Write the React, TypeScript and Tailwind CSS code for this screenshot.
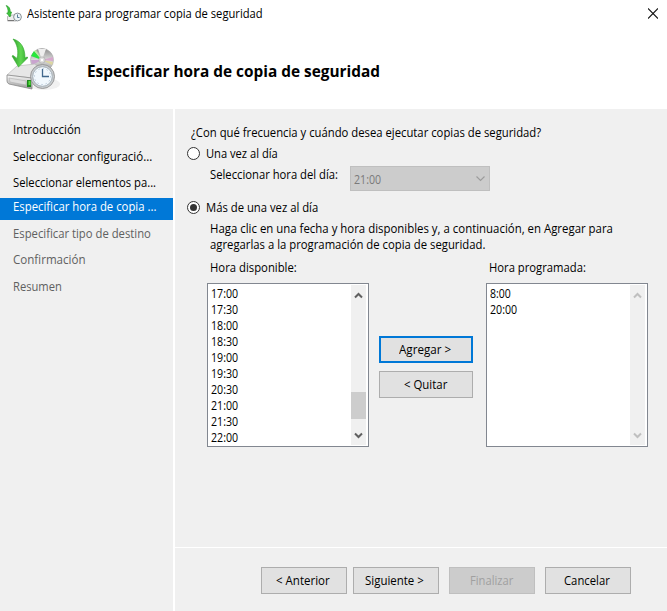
import { useLayoutEffect, useRef, useState } from "react";

/* One line of text condensed or widened to a given width. */
function Line({ w, children, className = "" }: { w: number; children: string; className?: string }) {
  const ref = useRef<HTMLSpanElement>(null);
  const [scale, setScale] = useState(1);
  useLayoutEffect(() => {
    if (ref.current) setScale(w / ref.current.offsetWidth);
  }, [w, children]);
  return (
    <span className={`block h-4 leading-4 ${className}`} style={{ width: w }}>
      <span ref={ref} className="inline-block origin-left whitespace-pre" style={{ transform: `scaleX(${scale})` }}>
        {children}
      </span>
    </span>
  );
}

function BackupIcon({ className }: { className: string }) {
  return (
    <svg className={className} viewBox="0 0 54 54">
      <defs>
        <linearGradient id="arrow" x1="0" y1="0" x2="1" y2="0">
          <stop offset="0" stopColor="#2f9a2c" />
          <stop offset=".55" stopColor="#5fd850" />
          <stop offset="1" stopColor="#2fa32b" />
        </linearGradient>
        <linearGradient id="disc" x1="0" y1="0" x2="0" y2="1">
          <stop offset="0" stopColor="#8c8c8c" />
          <stop offset=".5" stopColor="#dcdcdc" />
          <stop offset="1" stopColor="#999" />
        </linearGradient>
        <linearGradient id="drive" x1="0" y1="0" x2="0" y2="1">
          <stop offset="0" stopColor="#fafafa" />
          <stop offset="1" stopColor="#999" />
        </linearGradient>
      </defs>
      <ellipse cx="38" cy="46" rx="16" ry="6" fill="#f1f1f1" />
      <circle cx="36" cy="22" r="11.5" fill="url(#disc)" stroke="#aaa" strokeWidth=".6" />
      <path d="m36 22-11-4 3-5z" fill="#27e83b" />
      <path d="m36 22-8-9 2-1z" fill="#b9eda0" />
      <path d="m36 22-4-11h8z" fill="#eee" />
      <path d="m36 22 11-3v4z" fill="#d6a8cd" />
      <path d="m36 22 11 2-1 3z" fill="#ddd6a0" />
      <path d="m36 22-11 0 1 5z" fill="#c9a4cf" />
      <circle cx="36" cy="22" r="3.2" fill="#ddd" stroke="#999" strokeWidth=".5" />
      <circle cx="36" cy="22" r="1.2" fill="#fff" />
      <path d="m1 37 10-9 18-2 5 6-8 8z" fill="#e6e6e6" stroke="#bbb" strokeWidth=".7" />
      <path d="m1 37 25 3v11L3 46q-2-1-2-3z" fill="url(#drive)" stroke="#888" strokeWidth=".8" />
      <path d="m3 40 17 3v4L4 44z" fill="#ddd" stroke="#aaa" strokeWidth=".5" />
      <path d="M21 42h4v7h-4z" fill="#1d861d" />
      <path d="M22.500 43h2v4h-2z" fill="#56e03b" />
      <path d="M7 1c8 2 12 9 12 19l2-1 1 .6-9.500 9.400L6 18l1-.6 4 3C13 13 11 6 7 1z" fill="url(#arrow)" stroke="#31a82e" strokeWidth=".6" />
      <circle cx="36.500" cy="38.500" r="12" fill="#c8cccf" stroke="#8a8a8a" strokeWidth=".8" />
      <circle cx="36.500" cy="38.500" r="9.800" fill="#f1f8fd" stroke="#98a3ac" strokeWidth=".8" />
      <circle cx="36.500" cy="38.500" r="8" fill="none" stroke="#8ca5bd" strokeWidth="1" strokeDasharray=".8 3.389" />
      <path d="M36.500 31v7.500H43" fill="none" stroke="#41688d" strokeWidth="1.300" />
    </svg>
  );
}

function SmallBackupIcon() {
  return (
    <svg className="h-[17px] w-[17px]" viewBox="0 0 17 17">
      <path d="m2.500 11.500 5-1.500h4v6h-9z" fill="#eee" stroke="#aaa" strokeWidth=".8" />
      <path d="M3 15.500h6" stroke="#777" />
      <path d="M1.200.5c3 1 4 3 4 6.500L6.500 7 5 12 1.700 8l1.300-.1C3.500 5 2.500 2.500 1.200.5z" fill="#40c73c" stroke="#229a27" strokeWidth=".7" />
      <circle cx="12.500" cy="12" r="3.900" fill="#eef5f8" stroke="#8b9296" strokeWidth="1" />
      <path d="M12.500 9.500v3h2" fill="none" stroke="#466f8c" strokeWidth=".9" />
    </svg>
  );
}

function Radio({ checked = false }: { checked?: boolean }) {
  return (
    <span className="flex size-[13px] items-center justify-center rounded-full border border-[#333] bg-white">
      {checked && <span className="size-[7px] rounded-full bg-[#333]" />}
    </span>
  );
}

function Chevron({ up = false, color }: { up?: boolean; color: string }) {
  return (
    <svg className="h-[7px] w-[9px]" viewBox="0 0 9 7" fill="none" stroke={color} strokeWidth="2">
      <path d={up ? "M1 5.500 4.500 2 8 5.500" : "M1 1.500 4.500 5 8 1.500"} />
    </svg>
  );
}

function ListBox({ items, thumb = false }: { items: [string, number][]; thumb?: boolean }) {
  const color = thumb ? "#606060" : "#bfbfbf";
  return (
    <div className="flex h-[164px] w-[162px] border border-[#828790] bg-white py-px pr-[2px] pl-px">
      <div className="flex flex-1 flex-col pl-0.5">
        {items.map(([text, w]) => (
          <Line key={text} w={w}>{text}</Line>
        ))}
      </div>
      <div className="flex w-[15px] flex-col items-center bg-[#f0f0f0] pt-[7px] pb-[6px]">
        <Chevron up color={color} />
        <div className={`mt-[93px] h-[27px] w-full ${thumb ? "bg-[#cdcdcd]" : ""}`} />
        <div className="mt-auto flex"><Chevron color={color} /></div>
      </div>
    </div>
  );
}

function Button({ text, w, className }: { text: string; w: number; className: string }) {
  return (
    <button className={`flex h-[27px] items-center justify-center pb-[2px] ${className}`}>
      <Line w={w} className="text-left">{text}</Line>
    </button>
  );
}

const times: [string, number][] = ["17:00", "17:30", "18:00", "18:30", "19:00", "19:30", "20:30", "21:00", "21:30", "22:00"].map((t) => [t, 27]);

export default function App() {
  return (
    <div className="flex h-[611px] w-[667px] flex-col overflow-hidden bg-white font-['Open_Sans','Noto_Sans',sans-serif] text-[13px] text-black">
      <header className="h-[109px] shrink-0">
        <div className="flex h-[30px] items-start pt-[5px] pl-[5px]">
          <SmallBackupIcon />
          <Line w={236} className="ml-[5px]">Asistente para programar copia de seguridad</Line>
          <svg className="mt-[3px] mr-[9px] ml-auto h-[11px] w-[10px]" viewBox="0 0 10 11" fill="none" stroke="#111" strokeWidth="1.100">
            <path d="m0 .5 10 10M10 .5 0 10.500" />
          </svg>
        </div>
        <div className="flex pl-[6px]">
          <BackupIcon className="mt-[8px] size-[54px]" />
          <Line w={293} className="mt-[33px] ml-[27px] text-[16px] font-bold">Especificar hora de copia de seguridad</Line>
        </div>
      </header>
      <div className="flex min-h-0 flex-1">
        <nav className="flex w-[173px] shrink-0 flex-col bg-[#f0f0f0] pt-[12px] *:pl-[13px]">
          <div><Line w={68}>Introducción</Line></div>
          <div className="mt-[11px]"><Line w={139}>Seleccionar configuració...</Line></div>
          <div className="mt-[10px]"><Line w={143}>Seleccionar elementos pa...</Line></div>
          <div className="mt-[8px] h-[22px] bg-[#0078d7] text-white"><Line w={143}>Especificar hora de copia ...</Line></div>
          <div className="mt-[5px] text-[#606060]"><Line w={138}>Especificar tipo de destino</Line></div>
          <div className="mt-[10px] text-[#606060]"><Line w={73}>Confirmación</Line></div>
          <div className="mt-[11px] text-[#606060]"><Line w={49}>Resumen</Line></div>
        </nav>
        <div className="ml-[2px] flex flex-1 flex-col">
          <main className="h-[438px] bg-[#f0f0f0] pt-[15px] pl-[12px]">
            <Line w={350} className="ml-1">¿Con qué frecuencia y cuándo desea ejecutar copias de seguridad?</Line>
            <div className="mt-[5px] flex items-center gap-[6px]">
              <Radio />
              <Line w={72}>Una vez al día</Line>
            </div>
            <div className="mt-[5px] flex h-[25px] pl-[23px]">
              <Line w={128}>Seleccionar hora del día:</Line>
              <div className="ml-[12px] flex h-[25px] w-[140px] items-center border border-[#bfbfbf] bg-[#ccc] pr-1 pl-[3px] text-[#7a7a7a]">
                <Line w={27}>21:00</Line>
                <svg className="ml-auto h-[6px] w-[9px]" viewBox="0 0 9 6" fill="none" stroke="#9c9c9c" strokeWidth="1.100"><path d="m.5 .5 4 4 4-4" /></svg>
              </div>
            </div>
            <div className="mt-[8px] flex items-center gap-[6px]">
              <Radio checked />
              <Line w={112}>Más de una vez al día</Line>
            </div>
            <div className="mt-[5px] pl-[23px]">
              <Line w={403}>Haga clic en una fecha y hora disponibles y, a continuación, en Agregar para</Line>
              <Line w={275}>agregarlas a la programación de copia de seguridad.</Line>
            </div>
            <div className="mt-[7px] flex pl-[23px]">
              <Line w={87}>Hora disponible:</Line>
              <Line w={97} className="ml-[192px]">Hora programada:</Line>
            </div>
            <div className="mt-[8px] flex pl-[20px]">
              <ListBox items={times} thumb />
              <div className="mx-[10px] flex w-[94px] flex-col gap-[8px] pt-[53px] *:w-full">
                <Button text="Agregar >" w={52} className="border-2 border-[#0078d7] bg-[#e1e1e1] pr-[2px]" />
                <Button text="< Quitar" w={43} className="border border-[#adadad] bg-[#e1e1e1] pr-[2px]" />
              </div>
              <div className="ml-[3px]">
                <ListBox items={[["8:00", 21], ["20:00", 27]]} />
              </div>
            </div>
          </main>
          <footer className="mt-px flex flex-1 bg-[#f0f0f0] pt-[19px] pl-[86px] *:w-[86px]">
            <Button text="< Anterior" w={54} className="border border-[#adadad] bg-[#e1e1e1] pr-[2px]" />
            <Button text="Siguiente >" w={59} className="ml-[6px] border border-[#adadad] bg-[#e1e1e1] pr-[4px]" />
            <Button text="Finalizar" w={43} className="ml-[10px] border border-[#bfbfbf] bg-[#ccc] pr-[2px] text-[#a0a0a0]" />
            <Button text="Cancelar" w={46} className="ml-[10px] border border-[#adadad] bg-[#e1e1e1] pr-[2px]" />
          </footer>
        </div>
      </div>
    </div>
  );
}
